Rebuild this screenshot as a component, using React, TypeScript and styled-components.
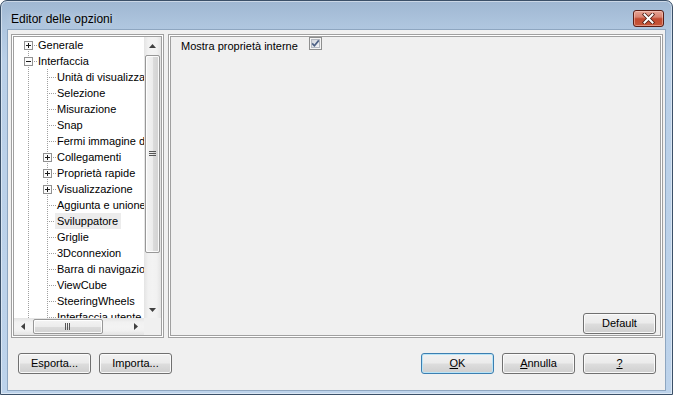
import React from 'react';
import styled, { createGlobalStyle } from 'styled-components';

const GlobalStyle = createGlobalStyle`
  html, body { margin: 0; padding: 0; background: #ffffff; }
  body {
    width: 673px; height: 395px; overflow: hidden;
    font-family: "Liberation Sans", Arial, sans-serif;
  }
`;

const Window = styled.div`
  width: 673px;
  height: 395px;
  box-sizing: border-box;
  border: 1px solid #3b5068;
  border-radius: 7px 7px 0 0;
  background: linear-gradient(180deg, #9fb7d2 0px, #afc6df 26px, #bad0e8 60px, #bdd3eb 100%);
  box-shadow: inset 0 0 0 1px rgba(255, 255, 255, 0.45);
  display: flex;
  flex-direction: column;
  padding: 0 6px 3px 6px;
`;

const TitleBar = styled.div`
  height: 28px;
  flex: none;
  display: flex;
  align-items: flex-start;
`;

const TitleText = styled.div`
  margin: 11px 0 0 4px;
  font-size: 12px;
  line-height: 14px;
  color: #000;
  text-shadow: 0 0 6px rgba(255, 255, 255, 0.6);
`;

const CloseButton = styled.div`
  margin: 9px 2px 0 auto;
  width: 31px;
  height: 17px;
  box-sizing: border-box;
  border: 1px solid #5a1d15;
  border-radius: 3px;
  background: linear-gradient(180deg, #e7a596 0%, #d88472 40%, #c24a31 52%, #c65639 100%);
  box-shadow: inset 0 0 0 1px rgba(255, 220, 210, 0.45);
  display: flex;
  align-items: center;
  justify-content: center;
`;

const Client = styled.div`
  flex: 1;
  border: 1px solid #8ea6c0;
  background: #f0f0f0;
  display: flex;
  flex-direction: column;
  padding: 4px 2px 16px 3px;
  font-size: 11px;
  color: #000;
`;

const TopArea = styled.div`
  display: flex;
  gap: 4px;
  height: 304px;
  flex: none;
`;

const SunkenPanel = styled.div<{ $width: number; $bg: string }>`
  width: ${(p) => p.$width}px;
  flex: none;
  box-sizing: border-box;
  border: 1px solid #a0a0a0;
  box-shadow: inset 0 0 0 1px #ffffff, inset 0 0 0 2px #a0a0a0;
  padding: 2px;
  background: ${(p) => p.$bg};
  display: flex;
  flex-direction: column;
`;

const TreeGrid = styled.div`
  flex: 1;
  min-height: 0;
  display: grid;
  grid-template-columns: 1fr 17px;
  grid-template-rows: 1fr 17px;
  background: #ffffff;
`;

const TreeList = styled.div`
  overflow: hidden;
  padding-left: 5px;
  min-width: 0;
  min-height: 0;
`;

const Row = styled.div`
  display: flex;
  height: 16px;
  align-items: center;
  white-space: nowrap;
`;

const GutterSvg = styled.svg`
  flex: none;
  display: block;
`;

const Label = styled.span<{ $selected?: boolean }>`
  line-height: 16px;
  padding: 0 3px 0 2px;
  margin-left: -2px;
  background: ${(p) => (p.$selected ? '#ececec' : 'transparent')};
`;

const VScroll = styled.div`
  display: flex;
  flex-direction: column;
  background: linear-gradient(90deg, #e4e4e4, #f1f1f1 25%, #f3f3f3 50%, #f1f1f1 75%, #e4e4e4);
`;

const HScroll = styled.div`
  display: flex;
  background: linear-gradient(180deg, #e4e4e4, #f1f1f1 25%, #f3f3f3 50%, #f1f1f1 75%, #e4e4e4);
`;

const Corner = styled.div`
  background: #f0f0f0;
`;

const ArrowCell = styled.div`
  width: 17px;
  height: 17px;
  flex: none;
  display: flex;
  align-items: center;
  justify-content: center;
`;

const VTrack = styled.div`
  flex: 1;
  display: flex;
  flex-direction: column;
  align-items: center;
  padding-top: 1px;
`;

const HTrack = styled.div`
  flex: 1;
  display: flex;
  align-items: center;
  padding-left: 2px;
`;

const Thumb = styled.div<{ $vertical?: boolean; $len: number }>`
  box-sizing: border-box;
  width: ${(p) => (p.$vertical ? '15px' : `${p.$len}px`)};
  height: ${(p) => (p.$vertical ? `${p.$len}px` : '15px')};
  border: 1px solid #979797;
  border-radius: 2px;
  box-shadow: inset 0 0 0 1px rgba(255, 255, 255, 0.85);
  background: ${(p) =>
    p.$vertical
      ? 'linear-gradient(90deg, #f4f4f4 0%, #ececec 50%, #dcdcdc 51%, #d2d2d2 100%)'
      : 'linear-gradient(180deg, #f4f4f4 0%, #ececec 50%, #dcdcdc 51%, #d2d2d2 100%)'};
  display: flex;
  align-items: center;
  justify-content: center;
`;

const OptionsPanelBody = styled.div`
  flex: 1;
  display: flex;
  flex-direction: column;
`;

const OptionRow = styled.div`
  display: flex;
  align-items: flex-start;
  padding: 1px 0 0 10px;
`;

const OptionLabel = styled.span`
  line-height: 16px;
`;

const CheckSvg = styled.svg`
  display: block;
  margin: -1px 0 0 11px;
`;

const BottomBar = styled.div`
  display: flex;
  margin-top: 15px;
  height: 21px;
  flex: none;
  padding: 0 7px;
  gap: 8px;
`;

const Spacer = styled.div`
  flex: 1;
`;

const Button = styled.button<{ $default?: boolean }>`
  width: 73px;
  height: 21px;
  flex: none;
  box-sizing: border-box;
  padding: 0;
  margin: 0;
  font-family: "Liberation Sans", Arial, sans-serif;
  font-size: 11px;
  color: #000;
  border-radius: 3px;
  border: 1px solid ${(p) => (p.$default ? '#3c7fb1' : '#707070')};
  box-shadow: ${(p) =>
    p.$default ? 'inset 0 0 0 1px #b9e4f7' : 'inset 0 0 0 1px rgba(252, 252, 252, 0.9)'};
  background: linear-gradient(180deg, #f2f2f2 0%, #ebebeb 48%, #dddddd 52%, #cfcfcf 100%);
  line-height: 19px;
  text-align: center;
`;

const DefaultButton = styled(Button)`
  align-self: flex-end;
  margin: auto 4px 1px 0;
`;

type TreeItem = {
  label: string;
  level: 0 | 1;
  box?: '+' | '-';
  top?: boolean;
  selected?: boolean;
};

const items: TreeItem[] = [
  { label: 'Generale', level: 0, box: '+', top: false },
  { label: 'Interfaccia', level: 0, box: '-', top: true },
  { label: 'Unità di visualizzazione', level: 1 },
  { label: 'Selezione', level: 1 },
  { label: 'Misurazione', level: 1 },
  { label: 'Snap', level: 1 },
  { label: 'Fermi immagine di oggetti', level: 1 },
  { label: 'Collegamenti', level: 1, box: '+' },
  { label: 'Proprietà rapide', level: 1, box: '+' },
  { label: 'Visualizzazione', level: 1, box: '+' },
  { label: 'Aggiunta e unione', level: 1 },
  { label: 'Sviluppatore', level: 1, selected: true },
  { label: 'Griglie', level: 1 },
  { label: '3Dconnexion', level: 1 },
  { label: 'Barra di navigazione', level: 1 },
  { label: 'ViewCube', level: 1 },
  { label: 'SteeringWheels', level: 1 },
  { label: 'Interfaccia utente', level: 1 },
  { label: 'Tavolozze', level: 1 },
];

const DOT = '#a0a0a0';

const PassGutter = () => (
  <GutterSvg width={19} height={16} viewBox="0 0 19 16">
    <line x1={9.5} y1={0} x2={9.5} y2={16} stroke={DOT} strokeDasharray="1 1" />
  </GutterSvg>
);

const NodeGutter = ({ box, top = true }: { box?: '+' | '-'; top?: boolean }) => (
  <GutterSvg width={19} height={16} viewBox="0 0 19 16">
    {top && (
      <line x1={9.5} y1={0} x2={9.5} y2={box ? 4 : 8} stroke={DOT} strokeDasharray="1 1" />
    )}
    <line x1={9.5} y1={box ? 14 : 8} x2={9.5} y2={16} stroke={DOT} strokeDasharray="1 1" />
    <line x1={box ? 15 : 11} y1={8.5} x2={19} y2={8.5} stroke={DOT} strokeDasharray="1 1" />
    {box && (
      <g>
        <rect x={5.5} y={4.5} width={8} height={8} fill="#fbfbfb" stroke="#919191" />
        <line x1={7} y1={8.5} x2={12} y2={8.5} stroke="#1a1a1a" />
        {box === '+' && <line x1={9.5} y1={6} x2={9.5} y2={11} stroke="#1a1a1a" />}
      </g>
    )}
  </GutterSvg>
);

const Arrow = ({ dir }: { dir: 'up' | 'down' | 'left' | 'right' }) => {
  const pts: Record<string, string> = {
    up: '0,4 3.5,0 7,4',
    down: '0,0 3.5,4 7,0',
    left: '4,0 0,3.5 4,7',
    right: '0,0 4,3.5 0,7',
  };
  const vertical = dir === 'up' || dir === 'down';
  return (
    <svg width={vertical ? 7 : 4} height={vertical ? 4 : 7} viewBox={vertical ? '0 0 7 4' : '0 0 4 7'}>
      <polygon points={pts[dir]} fill="#404040" />
    </svg>
  );
};

const GripV = () => (
  <svg width={7} height={6} viewBox="0 0 7 6">
    {[0, 2, 4].map((y) => (
      <line key={y} x1={0} y1={y + 0.5} x2={7} y2={y + 0.5} stroke="#555" />
    ))}
  </svg>
);

const GripH = () => (
  <svg width={6} height={7} viewBox="0 0 6 7">
    {[0, 2, 4].map((x) => (
      <line key={x} x1={x + 0.5} y1={0} x2={x + 0.5} y2={7} stroke="#555" />
    ))}
  </svg>
);

const CloseGlyph = () => (
  <svg width={13} height={11} viewBox="0 0 13 11">
    <path d="M2.5 1.5 L10.5 9.5 M10.5 1.5 L2.5 9.5" stroke="#4a1a12" strokeWidth={3.6} strokeLinecap="square" />
    <path d="M2.5 1.5 L10.5 9.5 M10.5 1.5 L2.5 9.5" stroke="#ffffff" strokeWidth={2} strokeLinecap="square" />
  </svg>
);

const Checkbox = () => (
  <CheckSvg width={13} height={13} viewBox="0 0 13 13">
    <defs>
      <linearGradient id="cbfill" x1="0" y1="0" x2="1" y2="1">
        <stop offset="0" stopColor="#cfd3da" />
        <stop offset="1" stopColor="#f6f7f9" />
      </linearGradient>
    </defs>
    <rect x={0.5} y={0.5} width={12} height={12} fill="#f4f4f4" stroke="#8e8f8f" />
    <rect x={2.5} y={2.5} width={8} height={8} fill="url(#cbfill)" stroke="#b4b9c2" />
    <path d="M3.2 6.4 L5.4 8.8 L9.8 3.4" fill="none" stroke="#4d6185" strokeWidth={1.7} />
  </CheckSvg>
);

export default function App() {
  return (
    <>
      <GlobalStyle />
      <Window>
        <TitleBar>
          <TitleText>Editor delle opzioni</TitleText>
          <CloseButton>
            <CloseGlyph />
          </CloseButton>
        </TitleBar>
        <Client>
          <TopArea>
            <SunkenPanel $width={153} $bg="#ffffff">
              <TreeGrid>
                <TreeList>
                  {items.map((it) => (
                    <Row key={it.label}>
                      {it.level === 1 && <PassGutter />}
                      <NodeGutter box={it.box} top={it.top ?? true} />
                      <Label $selected={it.selected}>{it.label}</Label>
                    </Row>
                  ))}
                </TreeList>
                <VScroll>
                  <ArrowCell>
                    <Arrow dir="up" />
                  </ArrowCell>
                  <VTrack>
                    <Thumb $vertical $len={198}>
                      <GripV />
                    </Thumb>
                  </VTrack>
                  <ArrowCell>
                    <Arrow dir="down" />
                  </ArrowCell>
                </VScroll>
                <HScroll>
                  <ArrowCell>
                    <Arrow dir="left" />
                  </ArrowCell>
                  <HTrack>
                    <Thumb $len={70}>
                      <GripH />
                    </Thumb>
                  </HTrack>
                  <ArrowCell>
                    <Arrow dir="right" />
                  </ArrowCell>
                </HScroll>
                <Corner />
              </TreeGrid>
            </SunkenPanel>
            <SunkenPanel $width={495} $bg="#f0f0f0">
              <OptionsPanelBody>
                <OptionRow>
                  <OptionLabel>Mostra proprietà interne</OptionLabel>
                  <Checkbox />
                </OptionRow>
                <DefaultButton>Default</DefaultButton>
              </OptionsPanelBody>
            </SunkenPanel>
          </TopArea>
          <BottomBar>
            <Button>Esporta...</Button>
            <Button>Importa...</Button>
            <Spacer />
            <Button $default>
              <u>O</u>K
            </Button>
            <Button>
              <u>A</u>nnulla
            </Button>
            <Button>
              <u>?</u>
            </Button>
          </BottomBar>
        </Client>
      </Window>
    </>
  );
}
